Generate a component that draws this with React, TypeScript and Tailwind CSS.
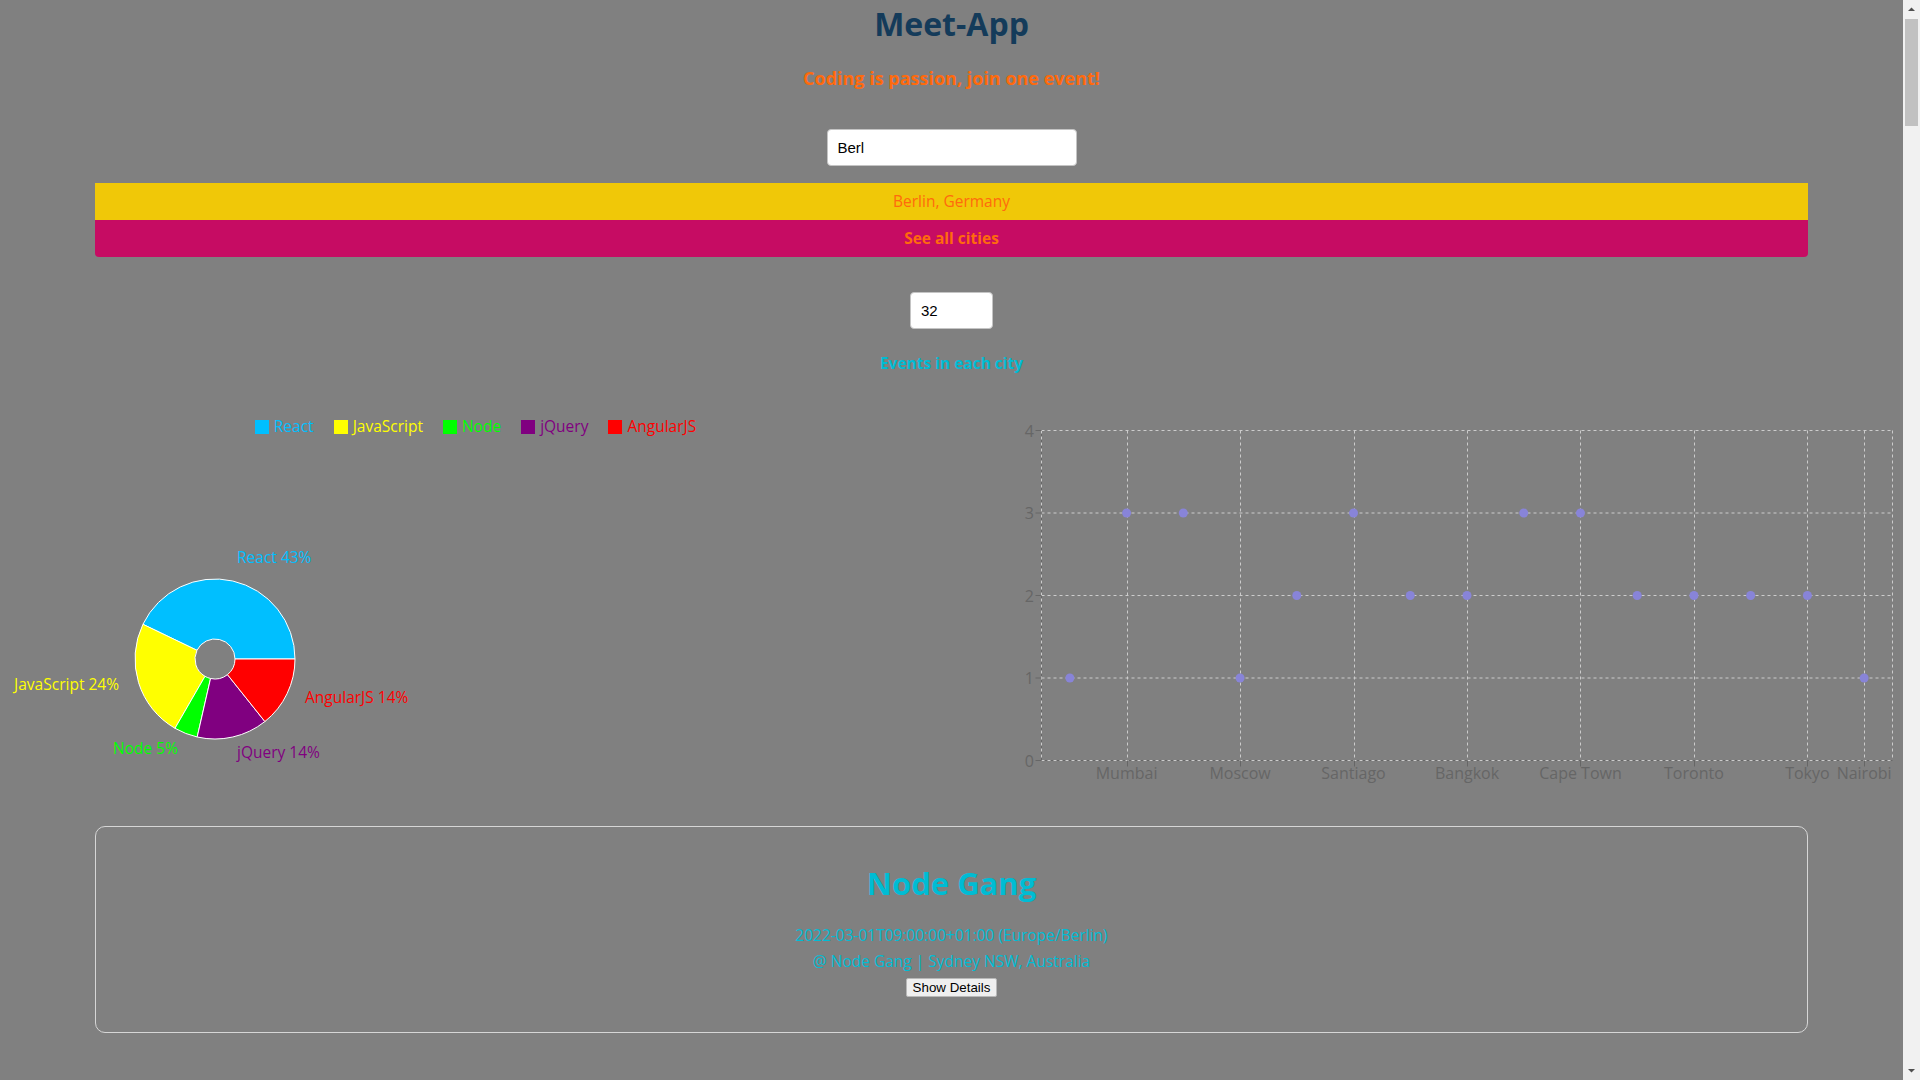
import { type ReactNode } from "react";

const FONT = "font-['Open_Sans','Noto_Sans',sans-serif]";

const genres = [
  { name: "React", value: 9, color: "#00bfff", lx: 237, ly: 118, anchor: "start" },
  { name: "JavaScript", value: 5, color: "#ffff00", lx: 119, ly: 245, anchor: "end" },
  { name: "Node", value: 1, color: "#00ff00", lx: 178, ly: 309, anchor: "end" },
  { name: "jQuery", value: 3, color: "#800080", lx: 237, ly: 313, anchor: "start" },
  { name: "AngularJS", value: 3, color: "#ff0000", lx: 305, ly: 258, anchor: "start" },
] as const;

// events per city, only some ticks get a label (the rest are dropped for room)
const cities = [
  { city: "London", count: 1, tick: false },
  { city: "Mumbai", count: 3, tick: true },
  { city: "Berlin", count: 3, tick: false },
  { city: "Moscow", count: 1, tick: true },
  { city: "Dubai", count: 2, tick: false },
  { city: "Santiago", count: 3, tick: true },
  { city: "Toronto ON", count: 2, tick: false },
  { city: "Bangkok", count: 2, tick: true },
  { city: "Sydney", count: 3, tick: false },
  { city: "Cape Town", count: 3, tick: true },
  { city: "Paris", count: 2, tick: false },
  { city: "Toronto", count: 2, tick: true },
  { city: "Seoul", count: 2, tick: false },
  { city: "Tokyo", count: 2, tick: true },
  { city: "Nairobi", count: 1, tick: true },
];

function arcPath(cx: number, cy: number, r0: number, r1: number, a0: number, a1: number) {
  const rad = (a: number) => (a * Math.PI) / 180;
  const pt = (r: number, a: number) => [cx + r * Math.cos(rad(a)), cy - r * Math.sin(rad(a))];
  const large = a1 - a0 > 180 ? 1 : 0;
  const [x0, y0] = pt(r1, a0);
  const [x1, y1] = pt(r1, a1);
  const [x2, y2] = pt(r0, a1);
  const [x3, y3] = pt(r0, a0);
  return `M${x0},${y0} A${r1},${r1} 0 ${large} 0 ${x1},${y1} L${x2},${y2} A${r0},${r0} 0 ${large} 1 ${x3},${y3} Z`;
}

function GenrePie() {
  const total = genres.reduce((s, g) => s + g.value, 0);
  let start = 0;
  const slices = genres.map((g) => {
    const end = start + (g.value / total) * 360;
    const d = arcPath(215, 220, 20, 80, start, end);
    start = end;
    return { ...g, d };
  });

  return (
    <div className="flex flex-col">
      <div className="mt-[15px] flex h-[24px] items-center justify-center gap-5 text-[15.5px]">
        {genres.map((g) => (
          <div key={g.name} className="flex items-center gap-[5px]">
            <span className="h-[14px] w-[14px]" style={{ backgroundColor: g.color }} />
            <span style={{ color: g.color }}>{g.name}</span>
          </div>
        ))}
      </div>
      <svg width={951} height={361} className="block">
        {slices.map((s) => (
          <path key={s.name} d={s.d} fill={s.color} stroke="#fff" strokeWidth={1} />
        ))}
        {slices.map((s) => (
          <text
            key={s.name + "-label"}
            x={s.lx}
            y={s.ly}
            fill={s.color}
            textAnchor={s.anchor}
            dominantBaseline="central"
            fontSize={15.5}
          >
            {s.name} {Math.round((s.value / total) * 100)}%
          </text>
        ))}
      </svg>
    </div>
  );
}

function CityScatter() {
  const left = 90.5;
  const right = 941.5;
  const top = 30.5;
  const bottom = 360.5;
  const band = (right - left) / cities.length;
  const yOf = (v: number) => bottom - v * ((bottom - top) / 4);
  const xOf = (i: number) => left + band * (i + 0.5);
  const ticked = cities.map((c, i) => ({ ...c, x: xOf(i) })).filter((c) => c.tick);

  return (
    <svg width={952} height={400} className="block">
      {/* axis lines under the dashed grid */}
      <line x1={left} y1={top} x2={left} y2={bottom} stroke="#666" />
      <line x1={left} y1={bottom} x2={right} y2={bottom} stroke="#666" />
      <g stroke="#ccc" strokeDasharray="3 3">
        {[0, 1, 2, 3, 4].map((v) => (
          <line key={v} x1={left} y1={yOf(v)} x2={right} y2={yOf(v)} />
        ))}
        <line x1={left} y1={top} x2={left} y2={bottom} />
        <line x1={right} y1={top} x2={right} y2={bottom} />
        {ticked.map((c) => (
          <line key={c.city} x1={Math.round(c.x) + 0.5} y1={top} x2={Math.round(c.x) + 0.5} y2={bottom} />
        ))}
      </g>
      {[0, 1, 2, 3, 4].map((v) => (
        <g key={v}>
          <line x1={left - 6} y1={yOf(v)} x2={left} y2={yOf(v)} stroke="#666" />
          <text x={83} y={yOf(v)} fill="#666" fontSize={16} textAnchor="end" dominantBaseline="central">
            {v}
          </text>
        </g>
      ))}
      {ticked.map((c) => (
        <g key={c.city}>
          <line x1={Math.round(c.x) + 0.5} y1={bottom} x2={Math.round(c.x) + 0.5} y2={bottom + 6} stroke="#666" />
          <text x={c.x} y={373} fill="#666" fontSize={16} textAnchor="middle" dominantBaseline="central">
            {c.city}
          </text>
        </g>
      ))}
      {cities.map((c, i) => (
        <circle key={c.city} cx={xOf(i)} cy={yOf(c.count)} r={4.5} fill="#8884d8" />
      ))}
    </svg>
  );
}

function FakeScrollbar() {
  return (
    <div className="flex h-full w-[17px] shrink-0 flex-col items-center bg-[#f1f1f1]">
      <svg width={17} height={17} className="block">
        <path d="M5 11 L8.5 7.5 L12 11 Z" fill="#505050" />
      </svg>
      <div className="mt-[2px] h-[107px] w-[13px] bg-[#c1c1c1]" />
      <div className="flex-1" />
      <svg width={17} height={17} className="block">
        <path d="M5 6 L8.5 9.5 L12 6 Z" fill="#505050" />
      </svg>
    </div>
  );
}

function Event({ children }: { children: ReactNode }) {
  return (
    <div className="mt-[26px] flex h-[207px] w-[90%] flex-col items-center rounded-[10px] border border-[#d6d6d6] pt-[36px]">
      {children}
    </div>
  );
}

export default function App() {
  return (
    <div className={`flex h-screen w-full overflow-hidden bg-[#808080] ${FONT}`}>
      <main className="flex min-w-0 flex-1 flex-col items-center">
        <h1 className="mt-[5px] text-[32px] leading-[38px] font-bold text-[#143b5a]">Meet-App</h1>
        <h3 className="mt-[24px] text-[18px] leading-[22px] font-bold text-[#ff6a0d]">
          Coding is passion, join one event!
        </h3>

        <input
          type="text"
          defaultValue="Berl"
          spellCheck
          className="mt-[40px] h-[37px] w-[250px] rounded-[4px] border border-[#c4c4c4] bg-white px-[10px] font-['Liberation_Sans',Arial,sans-serif] text-[15px] text-black outline-none"
        />
        <ul className="mt-[17px] w-[90%] overflow-hidden rounded-b-[4px] text-[15.5px] text-[#ff6a0d]">
          <li className="flex h-[37px] items-center justify-center bg-[#f0c808]">Berlin, Germany</li>
          <li className="flex h-[37px] items-center justify-center bg-[#c60c63] font-bold">See all cities</li>
        </ul>

        <input
          type="number"
          defaultValue={32}
          className="mt-[35px] h-[37px] w-[83px] rounded-[4px] border border-[#c4c4c4] bg-white px-[10px] font-['Liberation_Sans',Arial,sans-serif] text-[15px] text-black outline-none"
        />
        <h4 className="mt-[23px] text-[15.5px] leading-[22px] font-bold text-[#00bcd4]">Events in each city</h4>

        <div className="mt-[26px] grid h-[400px] w-full grid-cols-[951px_952px]">
          <GenrePie />
          <CityScatter />
        </div>

        <Event>
          <h2 className="text-[31px] leading-[40px] font-bold text-[#00bcd4]">Node Gang</h2>
          <p className="mt-[19px] text-[15.5px] leading-[26px] text-[#00bcd4]">
            2022-03-01T09:00:00+01:00 (Europe/Berlin)
          </p>
          <p className="text-[15.5px] leading-[26px] text-[#00bcd4]">@ Node Gang | Sydney NSW, Australia</p>
          <button className="mt-[4px] h-[19px] rounded-[2px] border border-[#b8b8b8] bg-[#efefef] px-[6px] font-['Liberation_Sans',Arial,sans-serif] text-[13.33px] leading-[15px] text-black">
            Show Details
          </button>
        </Event>
      </main>
      <FakeScrollbar />
    </div>
  );
}
